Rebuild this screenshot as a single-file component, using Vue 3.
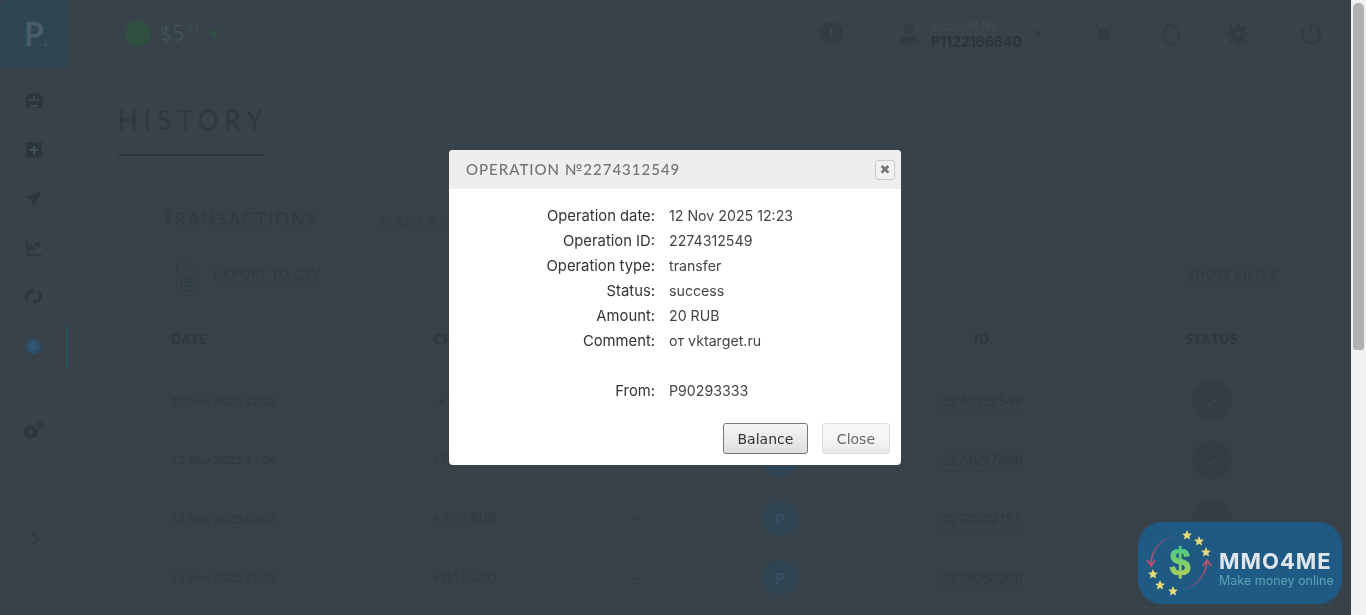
<script setup>
const details = [
  ['Operation date:', '12 Nov 2025 12:23'],
  ['Operation ID:', '2274312549'],
  ['Operation type:', 'transfer'],
  ['Status:', 'success'],
  ['Amount:', '20 RUB'],
  ['Comment:', 'от vktarget.ru'],
  ['', ''],
  ['From:', 'P90293333'],
];

// the fee cell of the first two rows sits behind the modal
const rows = [
  { date: '12 Nov 2025 12:23', sum: '+ 20 RUB', fee: '', id: '2274312549' },
  { date: '12 Nov 2025 11:09', sum: '+ 0.12 USD', fee: '', id: '2274297888' },
  { date: '12 Nov 2025 03:47', sum: '+ 7.76 RUB', fee: '—', id: '2274242191' },
  { date: '11 Nov 2025 13:36', sum: '+ 0.17 USD', fee: '—', id: '2274088208' },
];

const stars = [
  [49, 13], [61, 19], [68, 30], [15, 52], [22, 63], [35, 69],
];

const starPath = 'M0 -5 L1.5 -1.6 L5 -1.3 L2.3 1 L3.1 4.6 L0 2.7 L-3.1 4.6 L-2.3 1 L-5 -1.3 L-1.5 -1.6 Z';
</script>

<template>
  <div class="screen">
    <div class="page">
      <aside class="sidebar">
        <div class="brand">P<span class="brand-dot">.</span></div>
        <nav class="side-nav">
          <div class="side-item">
            <svg width="18" height="16" viewBox="0 0 18 16"><path fill="#2c363e" d="M9 0a9 8 0 0 1 9 8c0 3-1 5-2.500 7H2.500C1 13 0 11 0 8a9 8 0 0 1 9-8z"/><path stroke="#465259" stroke-width="1.500" fill="none" d="M9 3v5M4 6l3 2M14 6l-3 2M5 13h8"/></svg>
          </div>
          <div class="side-item">
            <svg width="16" height="16" viewBox="0 0 16 16"><rect width="16" height="16" rx="1" fill="#2c363e"/><path stroke="#465259" stroke-width="2" d="M8 4v8M4 8h8"/></svg>
          </div>
          <div class="side-item">
            <svg width="16" height="16" viewBox="0 0 16 16"><path fill="#2c363e" d="M16 0L0 6l5 3 2 7z"/></svg>
          </div>
          <div class="side-item">
            <svg width="16" height="16" viewBox="0 0 16 16"><path stroke="#2c363e" stroke-width="1.500" fill="none" d="M1 0v15h15M3 12l2-7 2 4 3-6 2 4 2-5"/></svg>
          </div>
          <div class="side-item">
            <svg width="17" height="17" viewBox="0 0 17 17"><path stroke="#2c363e" stroke-width="2.500" fill="none" d="M3 13A6.500 6.500 0 0 1 7 2.500M14 4a6.500 6.500 0 0 1-4 10.500"/><path fill="#2c363e" d="M7 0l3 3-3 3zM10 11l-3 3 3 3z"/></svg>
          </div>
          <div class="side-item active">
            <span class="side-dot">$</span>
          </div>
        </nav>
        <div class="side-gear">
          <svg width="21" height="18" viewBox="0 0 21 18"><circle cx="7.500" cy="10" r="4.500" fill="none" stroke="#2c363e" stroke-width="4"/><path stroke="#2c363e" stroke-width="2.500" d="M7.500 2.500v4M7.500 13.500v4M0 10h4M11 10h4M2.500 5l2 2M10.500 13l2 2M12.500 5l-2 2M4.500 13l-2 2"/><circle cx="17" cy="3" r="2" fill="none" stroke="#2c363e" stroke-width="1.500"/></svg>
        </div>
        <div class="side-arrow">
          <svg width="9" height="14" viewBox="0 0 9 14"><path d="M1 1l6 6-6 6" fill="none" stroke="#2c363e" stroke-width="1.500"/></svg>
        </div>
      </aside>

      <main class="main">
        <header class="topbar">
          <div class="balance">
            <span class="balance-dot">···</span>
            <span class="balance-sum">$5<sup>87</sup></span>
            <span class="caret green"></span>
          </div>
          <div class="top-right">
            <span class="info">!</span>
            <div class="account">
              <svg width="22" height="22" viewBox="0 0 22 22"><circle cx="11" cy="6" r="5" fill="#313c44"/><path fill="#313c44" d="M1 22c0-7 4-9 10-9s10 2 10 9z"/></svg>
              <div class="account-text">
                <div class="account-label">Account No</div>
                <div class="account-no">P1122166640</div>
              </div>
              <span class="caret"></span>
            </div>
            <div class="top-icons">
              <svg width="22" height="22" viewBox="0 0 22 22"><circle cx="11" cy="11" r="6" fill="#313c44"/><path stroke="#313c44" stroke-width="2" stroke-dasharray="2 3" d="M11 0v22M0 11h22M3 3l16 16M19 3L3 19"/></svg>
              <svg width="18" height="22" viewBox="0 0 18 22"><path fill="none" stroke="#313c44" stroke-width="2" d="M9 1c5 3 8 7 8 12a8 8 0 0 1-16 0c0-5 3-9 8-12z"/></svg>
              <svg width="22" height="22" viewBox="0 0 22 22"><circle cx="11" cy="11" r="5" fill="none" stroke="#313c44" stroke-width="5"/><path stroke="#313c44" stroke-width="3.500" d="M11 0v5M11 17v5M0 11h5M17 11h5M3 3l3.500 3.500M15.500 15.500L19 19M19 3l-3.500 3.500M6.500 15.500L3 19"/></svg>
              <svg class="power" width="20" height="22" viewBox="0 0 20 22"><path fill="none" stroke="#313c44" stroke-width="2.500" d="M5 4a9 9 0 1 0 10 0M10 0v10"/></svg>
            </div>
          </div>
        </header>

        <h1 class="title">HISTORY</h1>

        <section class="card">
          <div class="tabs">
            <div class="tab current">TRANSACTIONS</div>
            <div class="tab">ORDERS</div>
          </div>
          <div class="tools">
            <div class="export">
              <svg class="file" width="23" height="29" viewBox="0 0 23 29"><path fill="none" stroke="#303b43" d="M1 1h15l6 6v21H1z"/><path fill="none" stroke="#303b43" stroke-width="0.900" d="M5 12h13v11H5zM5 15.500h13M5 19h13M9.500 12v11M14 12v11"/></svg>
              <a class="link">EXPORT TO CSV</a>
            </div>
            <a class="link">SHOW FILTER</a>
          </div>
          <div class="table">
            <div class="table-row table-head">
              <div>DATE</div>
              <div class="center">CHANGE</div>
              <div></div>
              <div></div>
              <div class="center">ID</div>
              <div class="center">STATUS</div>
            </div>
            <div v-for="row in rows" :key="row.id" class="table-row">
              <div>{{ row.date }}</div>
              <div class="center sum">{{ row.sum }}</div>
              <div class="center">{{ row.fee }}</div>
              <div class="center"><span class="round-p">P</span></div>
              <div class="center"><span class="id-link">{{ row.id }}</span></div>
              <div class="center">
                <span class="round-ok">
                  <svg width="16" height="12" viewBox="0 0 16 12"><path d="M1 6l5 5 9-10" fill="none" stroke="#3a464d" stroke-width="1.500"/></svg>
                </span>
              </div>
            </div>
          </div>
        </section>
      </main>

      <div class="overlay">
        <div class="modal">
          <div class="modal-head">
            <span class="modal-title">OPERATION №2274312549</span>
            <button class="modal-x">✖</button>
          </div>
          <div class="modal-body">
            <div v-for="(item, i) in details" :key="i" class="detail">
              <div class="detail-label">{{ item[0] }}</div>
              <div class="detail-value">{{ item[1] }}</div>
            </div>
          </div>
          <div class="modal-foot">
            <button class="btn btn-primary">Balance</button>
            <button class="btn">Close</button>
          </div>
        </div>
      </div>

      <div class="promo">
        <svg class="promo-mark" width="80" height="82" viewBox="0 0 80 82">
          <defs>
            <linearGradient id="dollar" x1="0" y1="0" x2="0" y2="1">
              <stop offset="0" stop-color="#34c98f"/>
              <stop offset="1" stop-color="#c2d24e"/>
            </linearGradient>
            <linearGradient id="arrowLeft" x1="1" y1="0" x2="0" y2="1">
              <stop offset="0" stop-color="#1f5a85"/>
              <stop offset="1" stop-color="#b9506c"/>
            </linearGradient>
            <linearGradient id="arrowRight" x1="0" y1="1" x2="1" y2="0">
              <stop offset="0" stop-color="#1f5a85"/>
              <stop offset="1" stop-color="#b9506c"/>
            </linearGradient>
          </defs>
          <path d="M38 14C23 16 13 28 13 43" fill="none" stroke="url(#arrowLeft)" stroke-width="1.800"/>
          <path d="M9 38l4 6 4-6" fill="none" stroke="#b9506c" stroke-width="1.800"/>
          <path d="M44 67C58 65 68 54 69 39" fill="none" stroke="url(#arrowRight)" stroke-width="1.800"/>
          <path d="M65 44l4-6 4 6" fill="none" stroke="#b9506c" stroke-width="1.800"/>
          <path v-for="(s, i) in stars" :key="i" :d="starPath" :transform="`translate(${s[0]} ${s[1]})`" fill="#e6d978"/>
          <text x="42" y="53" text-anchor="middle" class="promo-dollar" fill="url(#dollar)" stroke="url(#dollar)" stroke-width="0.800">$</text>
        </svg>
        <div class="promo-text">
          <div class="promo-name">MMO4ME</div>
          <div class="promo-sub">Make money online</div>
        </div>
      </div>
    </div>

    <div class="scrollbar"><div class="scroll-thumb"></div></div>
  </div>
</template>

<style scoped>
.screen {
  display: flex;
  height: 615px;
  overflow: hidden;
  font-family: "Liberation Sans", sans-serif;
}

.page {
  position: relative;
  flex: 1;
  display: flex;
  background: #37424a;
  overflow: hidden;
}

.scrollbar {
  width: 15px;
  flex: none;
  background: #f1f1f1;
  padding: 3px 2px 0;
  box-sizing: border-box;
}

.scroll-thumb {
  height: 347px;
  background: #b2b2b2;
  border-radius: 5px 5px 3px 3px;
}

/* sidebar */
.sidebar {
  width: 68px;
  flex: none;
  display: flex;
  flex-direction: column;
  border-right: 1px solid #39444c;
  box-sizing: border-box;
  filter: blur(0.4px);
}

.brand {
  height: 67px;
  width: 68px;
  padding-left: 3px;
  box-sizing: border-box;
  background: #2e4553;
  border-top-left-radius: 8px;
  color: #4a5c68;
  font: bold 32px/67px "Lato", sans-serif;
  text-align: center;
}

.brand-dot {
  font-size: 14px;
}

.side-nav {
  padding-top: 9px;
}

.side-item {
  height: 49px;
  display: flex;
  align-items: center;
  justify-content: center;
  width: 67px;
  box-sizing: border-box;
}

.side-item.active {
  height: 44px;
  margin-top: 3px;
  width: 68px;
  border-right: 2px solid #2b4d60;
}

.side-dot {
  width: 15px;
  height: 15px;
  border-radius: 50%;
  background: #2b506c;
  color: #3d6480;
  font-size: 9px;
  line-height: 15px;
  text-align: center;
}

.side-gear {
  margin-top: 54px;
  height: 20px;
  display: flex;
  justify-content: center;
}

.side-arrow {
  margin-top: 90px;
  padding-left: 3px;
  display: flex;
  justify-content: center;
}

/* main area */
.main {
  flex: 1;
  padding-left: 50px;
  min-width: 0;
  filter: blur(0.4px);
}

.topbar {
  height: 67px;
  display: flex;
  align-items: center;
  justify-content: space-between;
  padding: 0 30px 0 7px;
}

.balance {
  display: flex;
  align-items: center;
}

.balance-dot {
  width: 25px;
  height: 25px;
  border-radius: 50%;
  background: #2f5240;
  color: #3f6a52;
  font-size: 10px;
  line-height: 25px;
  text-align: center;
}

.balance-sum {
  margin-left: 10px;
  color: #445058;
  font: 400 21px/1 "Open Sans", sans-serif;
}

.balance-sum sup {
  font-size: 11px;
  vertical-align: 9px;
  line-height: 0;
  margin-left: 3px;
}

.caret {
  width: 0;
  height: 0;
  border: 5px solid transparent;
  border-top: 6px solid #313c44;
  border-bottom: 0;
}

.caret.green {
  margin-left: 8px;
  border-width: 6px 6px 0;
  border-top-color: #2f5240;
}

.top-right {
  display: flex;
  align-items: center;
}

.info {
  width: 23px;
  height: 23px;
  border-radius: 50%;
  background: #313c44;
  color: #3f4a52;
  font-size: 12px;
  font-weight: bold;
  line-height: 23px;
  text-align: center;
}

.account {
  display: flex;
  align-items: center;
  margin-left: 55px;
}

.account-text {
  margin: 0 11px;
}

.account-label {
  font: 12px/15px "Inter", sans-serif;
  color: #414c54;
}

.account-no {
  font: bold 14px/17px "Inter", sans-serif;
  color: #2b353d;
}

.top-icons {
  display: flex;
  align-items: center;
  gap: 47px;
  margin-left: 50px;
}

.power {
  margin-left: 5px;
}

.title {
  margin: 40px 0 0;
  width: 146px;
  height: 47px;
  border-bottom: 2px solid #2c363e;
  color: #2e3840;
  font: 400 26px/26px "Lato", sans-serif;
  letter-spacing: 6px;
  white-space: nowrap;
}

/* card with the table */
.card {
  margin: 34px 22px 0 0;
  border: 1px solid #39444c;
  background: #364149;
}

.tabs {
  display: flex;
  height: 50px;
}

.tab {
  padding: 21px 0 0 23px;
  color: #323d45;
  font: 15px "Lato", sans-serif;
  letter-spacing: 1.500px;
}

.tab.current {
  width: 238px;
  box-sizing: border-box;
  padding: 17px 0 0 44px;
  border-right: 1px solid #39444c;
  color: #2f3a42;
  font-size: 17px;
  letter-spacing: 2.300px;
}

.tools {
  display: flex;
  align-items: center;
  justify-content: space-between;
  margin-top: 16px;
  padding: 0 49px 0 57px;
}

.export {
  display: flex;
  align-items: center;
  gap: 15px;
}

.file {
  margin-top: 6px;
}

.link {
  color: #2f3a42;
  border-bottom: 1px solid #323d45;
  font: 13px/19px "Lato", sans-serif;
  letter-spacing: 0.700px;
}

.table {
  margin-top: 31px;
}

.table-row {
  display: grid;
  grid-template-columns: 203px 180px 164px 124px 280px 180px;
  align-items: center;
  height: 59px;
  padding-left: 52px;
  color: #2f3a42;
  font: 12.300px "Lato", sans-serif;
}

.table-head {
  height: 32px;
  font-size: 13px;
  font-weight: bold;
  letter-spacing: 1px;
  margin-bottom: 16px;
  color: #2c363e;
}

.center {
  text-align: center;
}

.sum {
  font-size: 12.500px;
}

.round-p,
.round-ok {
  display: inline-flex;
  align-items: center;
  justify-content: center;
  border-radius: 50%;
}

.round-p {
  width: 35px;
  height: 35px;
  background: #2e4452;
  color: #3a5162;
  font-size: 16px;
  font-weight: bold;
}

.round-ok {
  width: 40px;
  height: 40px;
  background: #323d45;
}

.id-link {
  border-bottom: 1px solid #323d45;
  font-size: 14px;
  padding-bottom: 2px;
}

/* modal */
.overlay {
  position: absolute;
  inset: 0;
  display: flex;
  justify-content: center;
  padding: 150px 1px 0 0;
  box-sizing: border-box;
}

.modal {
  width: 452px;
  height: 315px;
  background: #fff;
  border-radius: 4px;
  overflow: hidden;
  display: flex;
  flex-direction: column;
}

.modal-head {
  height: 39px;
  flex: none;
  background: #eeeeee;
  display: flex;
  align-items: center;
  justify-content: space-between;
  padding: 0 6px 0 17px;
}

.modal-title {
  margin-top: -1px;
  color: #77736e;
  font: 500 15px "Lato", sans-serif;
  letter-spacing: 1px;
}

.modal-x {
  width: 20px;
  height: 20px;
  padding: 0;
  border: 1px solid #cccccc;
  border-radius: 3px;
  background: #f1f1f1;
  color: #777777;
  font: 13px/18px "DejaVu Sans", sans-serif;
}

.modal-body {
  padding-top: 14px;
  flex: 1;
}

.detail {
  display: grid;
  grid-template-columns: 206px 1fr;
  column-gap: 14px;
  align-items: baseline;
  height: 25px;
  font: 14.200px/25px "Inter", sans-serif;
}

.detail-label {
  text-align: right;
  color: #333333;
  font-size: 14.800px;
}

.detail-value {
  color: #444444;
}

.modal-foot {
  display: flex;
  justify-content: flex-end;
  gap: 14px;
  padding: 0 11px 11px;
}

.btn {
  height: 31px;
  padding: 0 14px;
  border: 1px solid #dddddd;
  border-radius: 3px;
  background: linear-gradient(#f6f6f6 50%, #e8e8e8);
  color: #666666;
  font: 14px "DejaVu Sans", sans-serif;
}

.btn-primary {
  padding: 0 13.500px;
  border-color: #777777;
  background: linear-gradient(#f6f6f6, #dedede);
  color: #333333;
}

/* promo badge over the page */
.promo {
  position: absolute;
  left: 1138px;
  top: 522px;
  width: 204px;
  height: 82px;
  background: #1f5a85;
  border-radius: 24px;
  display: flex;
  align-items: center;
}

.promo-dollar {
  font: bold 38px "Liberation Sans", sans-serif;
}

.promo-text {
  margin-left: 1px;
  padding-top: 9px;
}

.promo-name {
  color: #dfe6ec;
  font: 700 22px/26px "Inter", sans-serif;
  letter-spacing: 1px;
}

.promo-sub {
  color: #5aa5b0;
  font: 12.500px/14px "Inter", sans-serif;
}
</style>

<style>
html,
body {
  margin: 0;
  overflow: hidden;
}
</style>
